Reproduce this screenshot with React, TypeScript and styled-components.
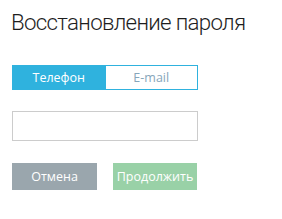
import React from "react";
import styled, { createGlobalStyle } from "styled-components";

const Global = createGlobalStyle`
  html, body { margin: 0; padding: 0; background: #fff; }
  body { font-family: "Open Sans", "Noto Sans", sans-serif; }
`;

const Page = styled.div`
  width: 282px;
  height: 219px;
  padding: 0 0 0 12px;
  box-sizing: border-box;
  display: flex;
  flex-direction: column;
`;

const Title = styled.h1`
  margin: 7px 0 0 -1px;
  font-family: Roboto, "Open Sans", sans-serif;
  font-weight: 300;
  font-size: 22.3px;
  line-height: 30px;
  letter-spacing: -0.7px;
  color: #1e1e1e;
  white-space: nowrap;
`;

const Tabs = styled.div`
  margin-top: 28px;
  width: 186px;
  height: 25px;
  display: flex;
`;

const Tab = styled.button<{ $active?: boolean }>`
  appearance: none;
  flex: 1;
  box-sizing: border-box;
  height: 25px;
  margin: 0;
  padding: 0;
  border: 1px solid #2fb2de;
  border-left-width: ${(p) => (p.$active ? "1px" : "0")};
  font-family: "Open Sans", sans-serif;
  font-size: 12.5px;
  font-weight: 400;
  background: ${(p) => (p.$active ? "#2fb2de" : "#fff")};
  color: ${(p) => (p.$active ? "#fff" : "#86a6bb")};
`;

const Input = styled.input`
  margin-top: 21px;
  width: 186px;
  height: 30px;
  box-sizing: border-box;
  border: 1px solid #cccccc;
  outline: none;
`;

const Buttons = styled.div`
  margin-top: 22px;
  display: flex;
  gap: 16px;
`;

const Button = styled.button<{ $color: string; $w: number }>`
  appearance: none;
  width: ${(p) => p.$w}px;
  height: 27px;
  border: none;
  padding: 0;
  background: ${(p) => p.$color};
  color: #fff;
  font-family: "Open Sans", sans-serif;
  font-size: 12.5px;
  font-weight: 400;
`;

export default function App() {
  return (
    <>
      <Global />
      <Page>
        <Title>Восстановление пароля</Title>
        <Tabs>
          <Tab $active>Телефон</Tab>
          <Tab>E-mail</Tab>
        </Tabs>
        <Input type="text" />
        <Buttons>
          <Button $color="#9aa6ad" $w={85}>Отмена</Button>
          <Button $color="#99d1a7" $w={84}>Продолжить</Button>
        </Buttons>
      </Page>
    </>
  );
}
